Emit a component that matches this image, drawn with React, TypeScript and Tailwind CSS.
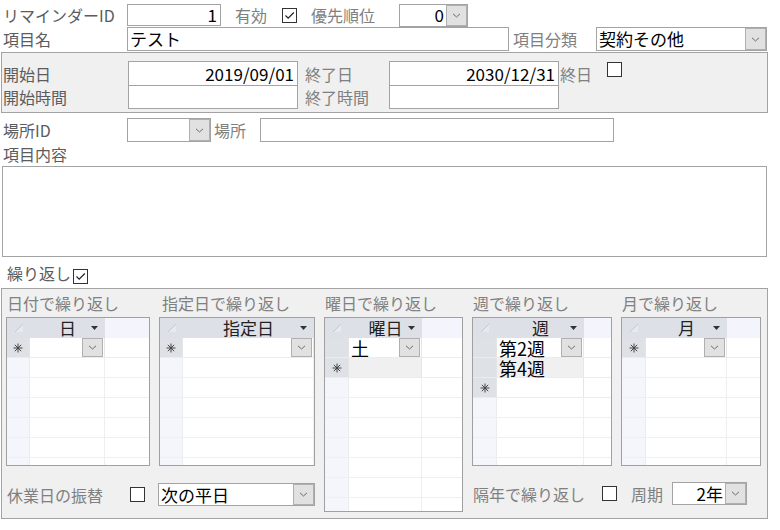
import React from "react";

type Row = { text?: string; current?: boolean; alt?: boolean; isNew?: boolean };

function Label({ className = "", light, children }: { className?: string; light?: boolean; children: React.ReactNode }) {
  return (
    <span className={`text-[16px] leading-[20px] whitespace-nowrap shrink-0 ${light ? "text-[#808080]" : "text-[#5c5c5c]"} ${className}`}>
      {children}
    </span>
  );
}

function Check({ checked, className = "" }: { checked?: boolean; className?: string }) {
  return (
    <span className={`w-[15px] h-[15px] border border-[#333333] bg-white flex items-center justify-center shrink-0 ${className}`}>
      {checked && (
        <svg width="11" height="9" viewBox="0 0 11 9">
          <path d="M1.5 4.5 L4.2 7.2 L9.8 1.5" fill="none" stroke="#222" strokeWidth="1.2" />
        </svg>
      )}
    </span>
  );
}

function DropBtn({ className = "" }: { className?: string }) {
  return (
    <span className={`w-[21px] bg-[#e1e1e1] border border-[#b0b0b0] flex items-center justify-center shrink-0 ${className}`}>
      <svg width="9" height="5" viewBox="0 0 9 5">
        <path d="M1 0.8 L4.5 4 L8 0.8" fill="none" stroke="#6b6b6b" strokeWidth="1" />
      </svg>
    </span>
  );
}

function Combo({ className = "", value, right }: { className?: string; value?: string; right?: boolean }) {
  return (
    <div className={`flex border border-[#a3a3a3] bg-white shrink-0 ${className}`}>
      <span className={`flex-1 text-[17px] leading-[20px] text-black flex items-center px-[2px] ${right ? "justify-end" : ""}`}>{value}</span>
      <DropBtn className="self-stretch" />
    </div>
  );
}

function Box({ className = "", value, right }: { className?: string; value?: string; right?: boolean }) {
  return (
    <div className={`border border-[#a3a3a3] bg-white flex items-center shrink-0 text-[17px] leading-[20px] text-black ${right ? "justify-end pr-[3px]" : "pl-[2px]"} ${className}`}>
      {value}
    </div>
  );
}

function Star() {
  return (
    <svg width="10" height="10" viewBox="0 0 10 10">
      <path d="M5 0.5 V9.5 M0.5 5 H9.5 M1.8 1.8 L8.2 8.2 M8.2 1.8 L1.8 8.2" stroke="#444" strokeWidth="1" fill="none" />
    </svg>
  );
}

function Datasheet({ size, sel, col, title, rows, fill }: { size: string; sel: string; col: string; title: string; rows: Row[]; fill: number }) {
  const empty = Array.from({ length: fill });
  return (
    <div className={`border border-[#a0a0a0] bg-white flex flex-col shrink-0 ${size}`}>
      <div className="flex h-[20px] shrink-0">
        <div className={`${sel} bg-[#dde1e7] shrink-0 flex items-center justify-center`}>
          <svg width="10" height="10" viewBox="0 0 10 10">
            <path d="M1 9 L9 1 V9 Z" fill="#e6e9ee" />
            <path d="M1 9 L9 1" stroke="#c2c8d1" strokeWidth="1" />
          </svg>
        </div>
        <div className={`${col} bg-[#dde1e7] shrink-0 flex items-center justify-center relative`}>
          <span className="text-[17px] leading-[18px] text-[#222]">{title}</span>
          <svg className="absolute right-[7px] top-[8px]" width="7" height="4" viewBox="0 0 7 4">
            <path d="M0 0 H7 L3.5 4 Z" fill="#333" />
          </svg>
        </div>
        <div className="flex-1 bg-[#f4f5fc]" />
      </div>
      {rows.map((r, i) => (
        <div key={i} className="flex h-[20px] shrink-0 border-b border-[#ececec]">
          <div className={`${sel} shrink-0 bg-[#dee1e6] flex items-center justify-center border-r border-[#e4e4e4]`}>
            {r.isNew && <Star />}
          </div>
          <div className={`${col} shrink-0 flex items-stretch border-r border-[#e6e6e6] ${r.alt ? "bg-[#f0f0f0]" : "bg-white"}`}>
            <span className="flex-1 text-[18px] leading-[18px] text-black pl-[2px] flex items-center">{r.text}</span>
            {r.current && <DropBtn className="mr-[1px] h-[19px]" />}
          </div>
          <div className="flex-1" />
        </div>
      ))}
      {empty.map((_, i) => (
        <div key={"e" + i} className="flex h-[20px] shrink-0 border-b border-[#efefef]">
          <div className={`${sel} shrink-0 bg-[#f5f6fc] border-r border-[#ececec]`} />
          <div className={`${col} shrink-0 border-r border-[#efefef]`} />
          <div className="flex-1" />
        </div>
      ))}
      <div className="flex flex-1 min-h-0">
        <div className={`${sel} shrink-0 bg-[#f5f6fc] border-r border-[#ececec]`} />
        <div className={`${col} shrink-0 border-r border-[#efefef]`} />
        <div className="flex-1" />
      </div>
    </div>
  );
}

function Column({ label, labelPad, children }: { label: string; labelPad: string; children: React.ReactNode }) {
  return (
    <div className="flex flex-col">
      <div className={`h-[28px] flex items-center ${labelPad}`}>
        <Label light>{label}</Label>
      </div>
      {children}
    </div>
  );
}

export default function App() {
  return (
    <div className="w-[780px] h-[530px] bg-white overflow-hidden font-['Noto_Sans_CJK_JP','Noto_Sans',sans-serif]">
      {/* header fields */}
      <div className="flex items-center h-[22px] mt-[4px]">
        <Label className="w-[127px] pl-[3px]">リマインダーID</Label>
        <Box className="w-[94px] h-[22px]" value="1" right />
        <Label light className="ml-[14px]">有効</Label>
        <Check checked className="ml-[15px]" />
        <Label light className="ml-[14px]">優先順位</Label>
        <Combo className="ml-[24px] w-[69px] h-[23px]" value="0" right />
      </div>
      <div className="flex items-center h-[24px] mt-[1px]">
        <Label className="w-[127px] pl-[3px]">項目名</Label>
        <Box className="w-[382px] h-[24px]" value="テスト" />
        <Label light className="ml-[4px]">項目分類</Label>
        <Combo className="ml-[19px] w-[171px] h-[24px]" value="契約その他" />
      </div>

      {/* dates */}
      <div className="ml-[1px] mt-[1px] w-[767px] h-[61px] bg-[#f0f0f0] border border-[#a3a3a3] pt-[8px]">
        <div className="flex items-center h-[25px]">
          <Label className="w-[126px] pl-[1px]">開始日</Label>
          <Box className="w-[170px] h-[25px]" value="2019/09/01" right />
          <Label light className="ml-[7px] w-[84px]">終了日</Label>
          <Box className="w-[170px] h-[25px]" value="2030/12/31" right />
          <Label light className="w-[48px] pl-[1px]">終日</Label>
          <Check className="-mt-[8px]" />
        </div>
        <div className="flex items-center h-[24px] -mt-[1px]">
          <Label className="w-[126px] pl-[1px]">開始時間</Label>
          <Box className="w-[170px] h-[24px]" />
          <Label light className="ml-[7px] w-[84px]">終了時間</Label>
          <Box className="w-[170px] h-[24px]" />
        </div>
      </div>

      <div className="flex items-center h-[24px] mt-[5px]">
        <Label className="w-[127px] pl-[3px]">場所ID</Label>
        <Combo className="w-[84px] h-[24px]" />
        <Label light className="ml-[3px] w-[46px]">場所</Label>
        <Box className="w-[354px] h-[24px]" />
      </div>
      <div className="flex items-center h-[24px]">
        <Label className="pl-[3px]">項目内容</Label>
      </div>
      <div className="ml-[2px] w-[765px] h-[91px] border border-[#a3a3a3] bg-white" />

      <div className="flex items-center h-[24px] mt-[4px]">
        <Label className="pl-[7px]">繰り返し</Label>
        <Check checked className="ml-[2px] mt-[6px]" />
      </div>

      {/* repeat settings */}
      <div className="ml-[1px] mt-[3px] w-[767px] h-[231px] bg-[#f0f0f0] border border-[#a3a3a3] pl-[4px] flex gap-[9px]">
        <div className="flex flex-col">
          <div className="flex gap-[9px]">
            <Column label="日付で繰り返し" labelPad="pl-[1px]">
              <Datasheet size="w-[144px] h-[149px]" sel="w-[23px]" col="w-[75px]" title="日" rows={[{ isNew: true, current: true }]} fill={5} />
            </Column>
            <Column label="指定日で繰り返し" labelPad="pl-[3px]">
              <Datasheet size="w-[156px] h-[149px]" sel="w-[23px]" col="w-[131px]" title="指定日" rows={[{ isNew: true, current: true }]} fill={5} />
            </Column>
          </div>
          <div className="flex items-center h-[23px] mt-[17px]">
            <Label light className="w-[124px] pl-[1px]">休業日の振替</Label>
            <Check />
            <Combo className="ml-[13px] w-[157px] h-[23px]" value="次の平日" />
          </div>
        </div>
        <Column label="曜日で繰り返し" labelPad="pl-[1px]">
          <Datasheet size="w-[139px] h-[195px]" sel="w-[24px]" col="w-[73px]" title="曜日" rows={[{ text: "土", current: true }, { isNew: true, alt: true }]} fill={6} />
        </Column>
        <div className="flex flex-col">
          <div className="flex gap-[9px]">
            <Column label="週で繰り返し" labelPad="pl-[1px]">
              <Datasheet size="w-[140px] h-[149px]" sel="w-[24px]" col="w-[87px]" title="週" rows={[{ text: "第2週", current: true }, { text: "第4週", alt: true }, { isNew: true }]} fill={3} />
            </Column>
            <Column label="月で繰り返し" labelPad="pl-[1px]">
              <Datasheet size="w-[140px] h-[149px]" sel="w-[24px]" col="w-[81px]" title="月" rows={[{ isNew: true, current: true }]} fill={5} />
            </Column>
          </div>
          <div className="flex items-center h-[23px] mt-[16px]">
            <Label light className="w-[130px] pl-[1px]">隔年で繰り返し</Label>
            <Check />
            <Label light className="ml-[14px] w-[41px]">周期</Label>
            <Combo className="w-[75px] h-[23px]" value="2年" right />
          </div>
        </div>
      </div>
    </div>
  );
}
